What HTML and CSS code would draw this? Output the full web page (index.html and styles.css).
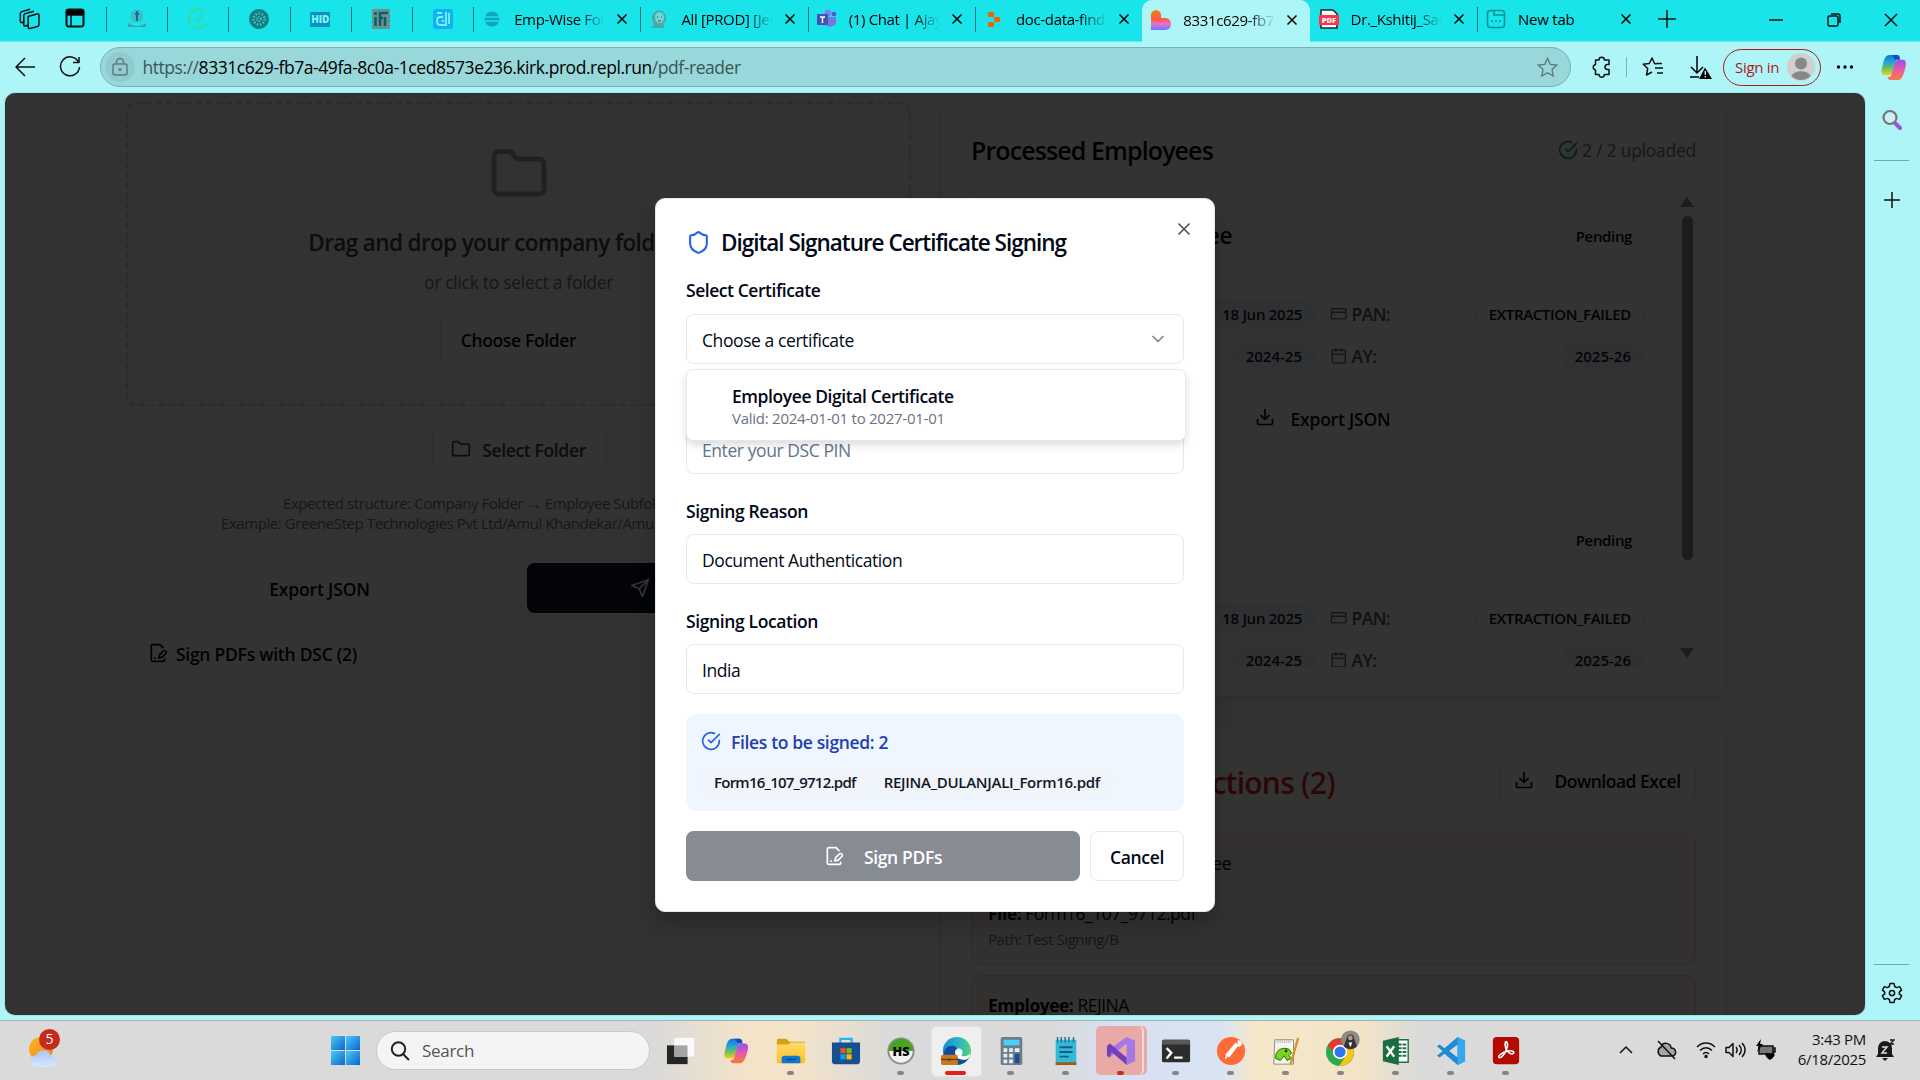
FILE: index.html
```html
<!DOCTYPE html>
<html lang="en">
<head>
<meta charset="utf-8">
<title>PDF Reader</title>
<link rel="stylesheet" href="styles.css">
</head>
<body>
<svg class="defs" width="0" height="0" aria-hidden="true">
  <defs>
    <linearGradient id="gBlue" x1="0" y1="0" x2="1" y2="1"><stop offset="0" stop-color="#4cc8fb"/><stop offset="1" stop-color="#0a67c9"/></linearGradient>
    <linearGradient id="gLove" x1="0" y1="0" x2="0" y2="1"><stop offset="0" stop-color="#ff7a18"/><stop offset=".45" stop-color="#ff5a3c"/><stop offset=".7" stop-color="#ee6fd0"/><stop offset="1" stop-color="#5a7bff"/></linearGradient>
    <linearGradient id="gCopA" x1="0" y1="0" x2="0" y2="1"><stop offset="0" stop-color="#1a6fe0"/><stop offset=".35" stop-color="#1ba6d8"/><stop offset=".7" stop-color="#7cc44e"/><stop offset="1" stop-color="#f5cf1d"/></linearGradient>
    <linearGradient id="gCopB" x1="0" y1="0" x2="0" y2="1"><stop offset="0" stop-color="#9a4df0"/><stop offset=".5" stop-color="#e85aa8"/><stop offset="1" stop-color="#fb7a3c"/></linearGradient>
    <linearGradient id="gSun" x1="0" y1="0" x2="1" y2="1"><stop offset="0" stop-color="#fdb827"/><stop offset="1" stop-color="#f07f13"/></linearGradient>
    <linearGradient id="gCloud" x1="0" y1="0" x2="0" y2="1"><stop offset="0" stop-color="#a9c4f7"/><stop offset="1" stop-color="#d9e7fd"/></linearGradient>
    <linearGradient id="gFold" x1="0" y1="0" x2="0" y2="1"><stop offset="0" stop-color="#ffdb66"/><stop offset="1" stop-color="#fbc02a"/></linearGradient>
    <linearGradient id="gEdge" x1="0" y1="0" x2="1" y2="0"><stop offset="0" stop-color="#1c8ad6"/><stop offset=".6" stop-color="#27b8c8"/><stop offset="1" stop-color="#5fd46a"/></linearGradient>
  </defs>
  <symbol id="folder" viewBox="0 0 24 24"><path d="M4 20h16a2 2 0 0 0 2-2V8a2 2 0 0 0-2-2h-7.93a2 2 0 0 1-1.66-.9l-.82-1.2A2 2 0 0 0 7.93 3H4a2 2 0 0 0-2 2v13c0 1.1.9 2 2 2Z"/></symbol>
  <symbol id="send" viewBox="0 0 24 24"><path d="m22 2-7 20-4-9-9-4Z"/><path d="M22 2 11 13"/></symbol>
  <symbol id="filesign" viewBox="0 0 24 24"><path d="M20 19.5v.5a2 2 0 0 1-2 2H6a2 2 0 0 1-2-2V4a2 2 0 0 1 2-2h8.5L18 5.5"/><path d="M8 18h1"/><path d="M18.42 9.61a2.1 2.1 0 1 1 2.97 2.97L16.95 17 13 18l.99-3.95 4.43-4.44Z"/></symbol>
  <symbol id="check" viewBox="0 0 24 24"><path d="M22 11.08V12a10 10 0 1 1-5.93-9.14"/><path d="m9 11 3 3L22 4"/></symbol>
  <symbol id="shield" viewBox="0 0 24 24"><path d="M20 13c0 5-3.5 7.5-7.66 8.95a1 1 0 0 1-.67-.01C7.5 20.5 4 18 4 13V6a1 1 0 0 1 1-1c2 0 4.5-1.2 6.24-2.72a1.17 1.17 0 0 1 1.52 0C14.51 3.81 17 5 19 5a1 1 0 0 1 1 1z"/></symbol>
  <symbol id="x" viewBox="0 0 24 24"><path d="M18 6 6 18M6 6l12 12"/></symbol>
  <symbol id="chev" viewBox="0 0 24 24"><path d="m6 9 6 6 6-6"/></symbol>
  <symbol id="download" viewBox="0 0 24 24"><path d="M21 15v4a2 2 0 0 1-2 2H5a2 2 0 0 1-2-2v-4"/><path d="m7 10 5 5 5-5M12 15V3"/></symbol>
  <symbol id="card" viewBox="0 0 24 24"><rect x="2" y="5" width="20" height="14" rx="2"/><path d="M2 10h20"/></symbol>
  <symbol id="cal" viewBox="0 0 24 24"><path d="M8 2v4M16 2v4M3 10h18"/><rect x="3" y="4" width="18" height="18" rx="2"/></symbol>
  <symbol id="star" viewBox="0 0 24 24"><path d="m12 2.500 2.900 6.200 6.800.8-5 4.600 1.300 6.700-6-3.300-6 3.300 1.300-6.700-5-4.600 6.800-.8z"/></symbol>
  <symbol id="copilot" viewBox="0 0 32 32"><path d="M20 3h-8C7 3 6 9 5 13c-1 4-3 9 1 11h5c3 0 4-3 5-7l3-9c.6-2 2-2 4-2-.5-2-1.500-3-3-3z" fill="url(#gCopA)"/><path d="M13 29h7c5 0 6-6 7.500-10 1-4 3-9-1-11h-5c-3 0-4 3-5 7l-2.500 8c-.8 3-2 3-4 3 .5 2 1.500 3 3 3z" fill="url(#gCopB)"/><path d="M19 3c2 0 3 1.500 4 5h-4c-2 0-2-3-5-5z" fill="#1748c8"/></symbol>
</svg>

<div class="screen">
  <header class="tabs">
    <div class="tab-tools">
      <svg width="22" height="22" viewBox="0 0 22 22" class="ln"><path d="M9 8.500 18 6c1.500-.4 2 .2 2 1.500v9c0 1-.4 1.500-1.500 2L11 20.500c-1 .3-1.800-.2-1.800-1.500V8.500zM9.200 17 6.500 18c-1 .3-1.700-.1-1.700-1.300V7.500c0-1 .5-1.500 1.500-1.900L15 3.200M4.800 14 3 14.500c-1 .3-1.700-.2-1.700-1.400V5.500c0-1 .5-1.500 1.500-1.900L11 1.200"/></svg>
      <svg width="20" height="20" viewBox="0 0 20 20" class="ln"><rect x="1.500" y="1.500" width="17" height="17" rx="2.500" stroke-width="2"/><path d="M1.500 2h17v5h-17z" fill="#000"/><path d="M6 7v11.500"/></svg>
    </div>
    <div class="pin"><svg width="22" height="22" viewBox="0 0 22 22"><circle cx="11" cy="8" r="6.500" fill="#38bfc3"/><path d="M11 3v10M9 6h4" stroke="#1668a8" stroke-width="2"/><path d="M2 15c5 4 13 4 18 0v4H2z" fill="#4f9ba5"/></svg></div>
    <div class="pin"><svg width="22" height="22" viewBox="0 0 22 22" fill="none" stroke="#38d9a0" stroke-width="1.800"><path d="M17.500 3.500a9.500 9.500 0 1 0 2 12M8 11l3 3 6-7"/></svg></div>
    <div class="pin"><svg width="22" height="22" viewBox="0 0 22 22"><circle cx="11" cy="11" r="10" fill="#127d82"/><circle cx="11" cy="11" r="5.500" fill="none" stroke="#48c8c8" stroke-width="2.500" stroke-dasharray="1.300 1.800"/><circle cx="11" cy="11" r="2" fill="none" stroke="#48c8c8" stroke-width="2" stroke-dasharray="1 1"/></svg></div>
    <div class="pin"><span class="hid">HID</span></div>
    <div class="pin"><svg width="20" height="22" viewBox="0 0 20 22"><path d="M1 1h18v20H1z" fill="#6a9094"/><path d="M4.500 9v9M4.500 4v3M9 18V5h8M14 9v9M9 10h3" stroke="#075f68" stroke-width="2.500" fill="none"/></svg></div>
    <div class="pin"><svg width="22" height="22" viewBox="0 0 22 22"><rect x="1" y="1" width="20" height="20" rx="3" fill="#12b2f2"/><path d="M14 4v13H8c-4 0-4-8 0-8h3M5 5h5M11 12v2M17 5v11" stroke="#7cf0ff" stroke-width="1.800" fill="none"/></svg></div>
    <div class="tab"><svg class="fav" viewBox="0 0 20 20"><circle cx="10" cy="10" r="7.500" fill="#12a3c4"/><path d="M2 8h16M2 12h16" stroke="#19e4ea" stroke-width="1.500"/></svg><span class="t">Emp-Wise Form</span><svg class="cl"><use href="#x"/></svg></div>
    <div class="tab"><svg class="fav" viewBox="0 0 20 20"><path d="M3 9c0-10 14-10 14 0 0 3-1 5-3 6l2 4H2l3-4c-1-2-2-3-2-6z" fill="#4aa9ad"/><ellipse cx="10.500" cy="8.500" rx="4.500" ry="5.500" fill="#73d5d2"/><path d="M8 8h1M12 8h1M9 12h3" stroke="#176d75"/></svg><span class="t">All [PROD] [Jen</span><svg class="cl"><use href="#x"/></svg></div>
    <div class="tab"><svg class="fav" viewBox="0 0 20 20"><circle cx="11" cy="4" r="3.500" fill="#7b83eb"/><circle cx="17" cy="5" r="2.300" fill="#5059c9"/><path d="M7 8h12v5c0 6-12 6-12 0z" fill="#7379de"/><rect y="5" width="11" height="11" rx="1" fill="#4650b8"/><path d="M3 8h5M5.500 8v6" stroke="#fff" stroke-width="1.500"/></svg><span class="t">(1) Chat | Ajay K</span><svg class="cl"><use href="#x"/></svg></div>
    <div class="tab nosep"><svg class="fav" viewBox="0 0 20 20" fill="#f26207"><rect x="4" y="3" width="6" height="5" rx="1"/><rect x="10" y="8" width="6" height="5" rx="1"/><rect x="4" y="13" width="6" height="5" rx="1"/></svg><span class="t">doc-data-finder</span><svg class="cl"><use href="#x"/></svg></div>
    <div class="tab active"><svg class="fav" viewBox="0 0 20 20"><path d="M0 5c0-6.500 10-6.500 10 0v3h4c8 0 8 12 0 12H0z" fill="url(#gLove)"/></svg><span class="t">8331c629-fb7a</span><svg class="cl"><use href="#x"/></svg></div>
    <div class="tab"><svg class="fav" viewBox="0 0 20 20"><path d="M2 1h12l4 4v14H2z" fill="#fff" stroke="#222" stroke-width="1.500"/><rect x="0" y="6" width="20" height="10" rx="1" fill="#fb3449"/><text x="10" y="14" font-size="7.500" font-weight="800" text-anchor="middle" fill="#fff">PDF</text></svg><span class="t">Dr._Kshitij_Sach</span><svg class="cl"><use href="#x"/></svg></div>
    <div class="tab"><svg class="fav" viewBox="0 0 20 20" fill="none" stroke="#0a9298" stroke-width="1.600"><rect x="1.500" y="1.500" width="17" height="17" rx="3"/><path d="M8 1.500V6h10M5 12h2M9 12h2M13 12h2"/></svg><span class="t full">New tab</span><svg class="cl"><use href="#x"/></svg></div>
    <svg class="newtab ln" width="20" height="20" viewBox="0 0 20 20"><path d="M10 1v18M1 10h18"/></svg>
    <div class="winctl">
      <svg width="14" height="14" viewBox="0 0 14 14" class="ln"><path d="M0 7h14"/></svg>
      <svg width="14" height="14" viewBox="0 0 14 14" class="ln"><rect x="1" y="3" width="10" height="10" rx="1.500"/><path d="M4 1h7c1.500 0 2 .5 2 2v7"/></svg>
      <svg width="14" height="14" viewBox="0 0 14 14" class="ln"><path d="m1 1 12 12M13 1 1 13"/></svg>
    </div>
  </header>

  <div class="toolbar">
    <svg class="ln back" width="22" height="22" viewBox="0 0 22 22"><path d="M21 11H2M11 2 2 11l9 9"/></svg>
    <svg class="ln reload" width="22" height="22" viewBox="0 0 22 22"><path d="M19.500 6A9.500 9.500 0 1 0 20.500 11M20 1v5.500h-6"/></svg>
    <div class="address">
      <span class="lock"><svg width="18" height="20" viewBox="0 0 18 20" fill="none" stroke="#5f7a7b" stroke-width="1.500"><rect x="2" y="7" width="14" height="11" rx="2"/><path d="M5.500 7V5a3.500 3.500 0 0 1 7 0v2"/><circle cx="9" cy="12.500" r=".8"/></svg></span>
      <span class="url"><i>https://</i>8331c629-fb7a-49fa-8c0a-1ced8573e236.kirk.prod.repl.run<i>/pdf-reader</i></span>
      <svg class="bookmark" width="23" height="23"><use href="#star"/></svg>
    </div>
    <svg class="ln ext" width="22" height="22" viewBox="0 0 22 22"><path d="M4.500 4H8a2.700 2.700 0 0 1 5.400 0H18v4.500h-1.500a2.500 2.500 0 0 0 0 5H18V18.500h-4.600a2.700 2.700 0 0 1-5.400 0H4.500v-4.500a2.800 2.800 0 0 1 0-5.500z"/></svg>
    <span class="tsep"></span>
    <svg class="ln favs" width="23" height="22" viewBox="0 0 23 22"><path d="M14.500 7.500H20M13 12h8M15 17h6M14.500 8 12.500 7.500 10 2 7.300 7.500l-6 .7L5.700 12.500 4.500 19l5.500-3"/></svg>
    <svg class="dl" width="24" height="25" viewBox="0 0 24 25"><path d="M9 1v17M3 12l6 6 6-6M2 22h9" fill="none" stroke="#000" stroke-width="1.500"/><path d="M17 12.500 24 24H11z"/><path d="M17.300 16v4M17.300 21v1.500" stroke="#fff" stroke-width="1.300"/></svg>
    <div class="signin"><span>Sign in</span><svg width="28" height="28" viewBox="0 0 28 28"><circle cx="14" cy="14" r="14" fill="#d2d0ce"/><circle cx="14" cy="10.500" r="6" fill="#8a8886"/><path d="M4.500 23c2-6.500 17-6.500 19 0a13.500 13.500 0 0 1-19 0z" fill="#8a8886"/></svg></div>
    <svg class="dots" width="18" height="6" viewBox="0 0 18 6"><circle cx="2.500" cy="3" r="1.700"/><circle cx="9" cy="3" r="1.700"/><circle cx="15.500" cy="3" r="1.700"/></svg>
    <svg class="cop" width="31" height="31"><use href="#copilot"/></svg>
  </div>

  <div class="body">
    <main class="viewport">
      <div class="content">
        <section class="left">
          <div class="drop">
            <svg class="ic big"><use href="#folder"/></svg>
            <h3>Drag and drop your company folder here</h3>
            <p>or click to select a folder</p>
            <button class="btn choose">Choose Folder</button>
          </div>
          <button class="btn select"><svg class="ic"><use href="#folder"/></svg>Select Folder</button>
          <div class="hint"><p>Expected structure: Company Folder → Employee Subfolders</p><p class="ex">Example: GreeneStep Technologies Pvt Ltd/Amul Khandekar/Amul</p></div>
          <div class="pair"><button class="btn">Export JSON</button><button class="btn dark"><svg class="ic"><use href="#send"/></svg></button></div>
          <button class="btn signall"><svg class="ic"><use href="#filesign"/></svg>Sign PDFs with DSC (2)</button>
        </section>

        <section class="right">
          <div class="panel processed">
            <div class="phead"><h2>Processed Employees</h2><span class="up"><svg class="ic green"><use href="#check"/></svg>2 / 2 uploaded</span></div>
            <div class="list">
              <div class="items">
                <article class="emp">
                  <div class="ehead"><h3 class="far">Unknown Employee</h3><span class="badge out">Pending</span></div>
                  <div class="fields">
                    <div class="f"><span class="badge sec">18 Jun 2025</span></div>
                    <div class="f"><span class="k"><svg class="ic"><use href="#card"/></svg>PAN:</span><span class="badge out">EXTRACTION_FAILED</span></div>
                    <div class="f"><span class="badge sec yr">2024-25</span></div>
                    <div class="f"><span class="k"><svg class="ic"><use href="#cal"/></svg>AY:</span><span class="badge sec yr">2025-26</span></div>
                  </div>
                  <button class="btn exp"><svg class="ic"><use href="#download"/></svg>Export JSON</button>
                </article>
                <article class="emp second">
                  <div class="ehead"><h3>REJINA</h3><span class="badge out">Pending</span></div>
                  <div class="fields">
                    <div class="f"><span class="badge sec">18 Jun 2025</span></div>
                    <div class="f"><span class="k"><svg class="ic"><use href="#card"/></svg>PAN:</span><span class="badge out">EXTRACTION_FAILED</span></div>
                    <div class="f"><span class="badge sec yr">2024-25</span></div>
                    <div class="f"><span class="k"><svg class="ic"><use href="#cal"/></svg>AY:</span><span class="badge sec yr">2025-26</span></div>
                  </div>
                </article>
              </div>
              <div class="sbar"><i class="upar"></i><i class="thumb"></i><i class="downar"></i></div>
            </div>
          </div>
          <div class="panel failed">
            <div class="fhead"><h2>Failed Extractions (2)</h2><button class="btn xls"><svg class="ic"><use href="#download"/></svg>Download Excel</button></div>
            <div class="err"><p class="who"><b>Employee:</b><span>Unknown Employee</span></p><p class="file"><b>File:</b> Form16_107_9712.pdf</p><p class="path">Path: Test Signing/B</p></div>
            <div class="err"><p><b>Employee:</b> REJINA</p></div>
          </div>
        </section>
      </div>
      <div class="overlay">
        <div class="modal">
          <svg class="ic close"><use href="#x"/></svg>
          <h2><svg class="ic"><use href="#shield"/></svg>Digital Signature Certificate Signing</h2>
          <label class="l1">Select Certificate</label>
          <div class="input sel"><span class="choice">Choose a certificate</span><svg class="ic"><use href="#chev"/></svg>
            <div class="menu"><b>Employee Digital Certificate</b><span>Valid: 2024-01-01 to 2027-01-01</span></div>
          </div>
          <div class="input pinput">Enter your DSC PIN</div>
          <label>Signing Reason</label>
          <div class="input">Document Authentication</div>
          <label>Signing Location</label>
          <div class="input">India</div>
          <div class="files">
            <div class="fh"><svg class="ic"><use href="#check"/></svg>Files to be signed: 2</div>
            <div class="chips"><span class="badge sec">Form16_107_9712.pdf</span><span class="badge sec caps">REJINA_DULANJALI_Form16.pdf</span></div>
          </div>
          <div class="actions"><button class="sign"><svg class="ic"><use href="#filesign"/></svg>Sign PDFs</button><button class="cancel">Cancel</button></div>
        </div>
      </div>
    </main>
    <aside class="side">
      <svg width="22" height="22" viewBox="0 0 22 22" fill="none"><circle cx="9" cy="8.500" r="6.500" stroke="#6d7780" stroke-width="2.200" fill="#cfeef2"/><path d="m14.500 14.500 4.500 4.500" stroke="#9a55d8" stroke-width="4" stroke-linecap="round"/></svg>
      <hr class="h1">
      <svg class="ln pl" width="16" height="16" viewBox="0 0 16 16"><path d="M8 0v16M0 8h16"/></svg>
      <hr class="h2">
      <svg class="ln gear" width="22" height="22" viewBox="0 0 22 22"><path d="M9 1.500h4l.7 3 2 1.100 2.900-1 2 3.500-2.300 2v1.800l2.300 2-2 3.500-2.900-1-2 1.100-.7 3H9l-.7-3-2-1.100-2.900 1-2-3.500 2.300-2v-1.800l-2.300-2 2-3.500 2.900 1 2-1.100z"/><circle cx="11" cy="11" r="2.600"/></svg>
    </aside>
  </div>

  <footer class="taskbar">
    <div class="weather"><svg width="32" height="34" viewBox="0 0 32 34"><circle cx="12" cy="15" r="12" fill="url(#gSun)"/><path d="M8 33a6 6 0 0 1-1-12 8 8 0 0 1 15 1 5.500 5.500 0 0 1 0 11z" fill="url(#gCloud)"/></svg><em>5</em></div>
    <svg class="win" width="29" height="29" viewBox="0 0 29 29" fill="url(#gBlue)"><rect width="14" height="14"/><rect x="15" width="14" height="14"/><rect y="15" width="14" height="14"/><rect x="15" y="15" width="14" height="14"/></svg>
    <div class="search"><svg width="20" height="20" viewBox="0 0 20 20" fill="none" stroke="#222" stroke-width="2"><circle cx="8.500" cy="8" r="6.700"/><path d="m13 13 6 6"/></svg>Search</div>
    <div class="apps">
      <div class="app"><svg viewBox="0 0 32 32"><path d="M1 10h22v20H1z" fill="#252525"/><path d="M9 2h21v20H9z" fill="#fafafa"/><path d="M9 10h14v12H9z" fill="#a5a5a5"/></svg></div>
      <div class="app"><svg viewBox="0 0 32 32"><use href="#copilot"/></svg></div>
      <div class="app run"><svg viewBox="0 0 32 32"><path d="M1 5c0-2 1-2 2-2h8l3 3h17v20H1z" fill="#d99d10"/><path d="M1 9h12l3-2h15v20c0 2-1 2-2 2H1z" fill="url(#gFold)"/><path d="M6 29v-5c0-2 1-3 3-3h14c2 0 3 1 3 3v5z" fill="#0f77cf"/><path d="M11 25h10" stroke="#0a4a8d" stroke-width="1.500"/></svg></div>
      <div class="app"><svg viewBox="0 0 32 32"><path d="M10 8V3h12v5" fill="none" stroke="#27b4f2" stroke-width="2.500"/><path d="M1 7h30v20c0 2-1 3-3 3H4c-2 0-3-1-3-3z" fill="#174f92"/><path d="M10 13h5.500v5.500H10z" fill="#f25022"/><path d="M16.500 13H22v5.500h-5.500z" fill="#7fba00"/><path d="M10 19.500h5.500V25H10z" fill="#00a4ef"/><path d="M16.500 19.500H22V25h-5.500z" fill="#ffb900"/></svg></div>
      <div class="app run"><svg viewBox="0 0 32 32"><circle cx="16" cy="16" r="13.500" fill="#f2f2f2" stroke="#8a8f88" stroke-width="2"/><path d="M3 16a13 13 0 0 1 26 0z" fill="#45a522"/><text x="16" y="21" font-size="13.500" font-weight="800" text-anchor="middle">HS</text></svg></div>
      <div class="app run on"><svg viewBox="0 0 32 32"><circle cx="17" cy="16" r="15" fill="url(#gEdge)"/><path d="M3 20c0-11 14-13 15-4-4 3-3 9 4 9 3 0 6-1 8-3-5 12-24 12-27-2z" fill="#104a9a"/><path d="M15 17c0-5 8-5 8 0 0 2-1 3-1 4s8 1 9-3c0 6-4 8-9 7-5-1-7-4-7-8z" fill="#fff"/><rect x="0" y="20" width="18" height="11" rx="2" fill="#c87a22"/><path d="M0 25h18M9 24v3" stroke="#6e3c08" stroke-width="1.500"/></svg></div>
      <div class="app run"><svg viewBox="0 0 32 32"><rect x="5" y="1" width="23" height="30" rx="2" fill="#6d7c89"/><path d="M8 4h17v6H8z" fill="#49d0f7"/><path d="M8 13h4v4H8zM14 13h4v4h-4zM20 13h5v4h-5zM8 19h4v4H8zM14 19h4v4h-4zM8 25h4v4H8zM14 25h4v4h-4z" fill="#e9edf1"/><path d="M20 19h5v10h-5z" fill="#174f92"/></svg></div>
      <div class="app run"><svg viewBox="0 0 32 32"><rect x="5" y="4" width="22" height="27" rx="1" fill="#35b9d8"/><path d="M5 28h22v3H5z" fill="#a15a16"/><path d="M9 12h14M9 17h14M9 22h10" stroke="#155f7d" stroke-width="2"/><path d="M7 1v6M11 1v6M15 1v6M19 1v6M24 1v6" stroke="#1d6f8c" stroke-width="1.500"/></svg></div>
      <div class="app run vs"><svg viewBox="0 0 32 32"><path d="m22 1 9 4v22l-9 4V8L4 23l-3-2V11l3-3 4 3L22 1z" fill="#a877e6"/><path d="m1 11 3-3 18 15v8L6 17l-2 6-3-2z" fill="#7440b8"/></svg></div>
      <div class="app run"><svg viewBox="0 0 32 32"><rect x="1" y="4" width="30" height="24" rx="2" fill="#2d2d2d"/><path d="M1 6a2 2 0 0 1 2-2h26a2 2 0 0 1 2 2v3H1z" fill="#585858"/><path d="m6 13 5 5-5 6M14 23h9" fill="none" stroke="#fff" stroke-width="2.500"/></svg></div>
      <div class="app run"><svg viewBox="0 0 32 32"><circle cx="16" cy="16" r="15" fill="#ff6c37"/><path d="m11 20 10-12 2 2-9 12zM23 6a2.500 2.500 0 1 1 0 4M10 24l2-3" fill="#fff" stroke="#fff" stroke-width="1.500"/></svg></div>
      <div class="app run"><svg viewBox="0 0 32 32"><path d="M4 4h20v26H3z" fill="#f6f6ee" stroke="#8b8b7d"/><path d="M6 6h16" stroke="#bbb" stroke-width="3" stroke-dasharray="1 1"/><path d="M5 24c-1-8 6-13 14-10l3 4-3 3 3 3-5 2-3-5-4 5z" fill="#7ed321" stroke="#1f6207"/><circle cx="16" cy="16" r="1.500" fill="#143d05"/><path d="m29 2-7 24-1 4" stroke="#d5952f" stroke-width="2.500"/></svg></div>
      <div class="app run"><svg viewBox="0 0 32 32"><circle cx="15" cy="17" r="15" fill="#2da94f"/><path d="M2 10a15 15 0 0 1 26 0H15l-5 10z" fill="#e33b2e"/><path d="M15 10h13c5 9-1 22-14 22l8-12z" fill="#fcc31e"/><circle cx="15" cy="17" r="6.800" fill="#2f74e8" stroke="#fff" stroke-width="1.800"/><circle cx="26" cy="4" r="10" fill="#8b8b8b"/><path d="M19 11l3-8c1-6 8-6 8 0l3 8c-4 4-10 4-14 0z" fill="#333"/><circle cx="26" cy="2" r="2.500" fill="#c59a82"/><path d="m24 7 2 5 2-5z" fill="#fff"/></svg></div>
      <div class="app run"><svg viewBox="0 0 32 32"><path d="M14 4h15v24H14z" fill="#fff" stroke="#1e7145" stroke-width="1.500"/><path d="M18 9h9M18 13h9M18 17h9M18 21h9" stroke="#1e7145" stroke-width="2.200" stroke-dasharray="4 1"/><path d="m2 5 17-4v30L2 27z" fill="#1b6e41"/><path d="m6 11 8 11M14 11 6 22" stroke="#fff" stroke-width="2.500"/></svg></div>
      <div class="app run"><svg viewBox="0 0 32 32"><path d="m23 1 8 4v22l-8 4L9 19l-5 4-3-2 6-5-6-5 3-2 5 4z" fill="#1f8ad2"/><path d="M23 9v14l-9-7z" fill="#dcdcdc"/><path d="m23 1 8 4v22l-8 4z" fill="#36a8ee"/></svg></div>
      <div class="app run"><svg viewBox="0 0 32 32"><rect x="2" y="1" width="28" height="29" rx="4" fill="#b30b00"/><path d="M9 23c-3-1 3-6 9-7s8 2 5 3-8-4-8-10 4-2 2 4-6 11-8 10z" fill="none" stroke="#fff" stroke-width="1.700"/></svg></div>
    </div>
    <div class="tray">
      <svg class="ln" width="14" height="10" viewBox="0 0 14 10" stroke-width="2"><path d="m1 8 6-6 6 6"/></svg>
      <svg class="ln" width="22" height="22" viewBox="0 0 22 22"><path d="M6 17a5 5 0 0 1 0-9c2-6 10-4 10 1 6 0 6 8 1 8z" fill="#a5a5a5"/><path d="m3 2 17 18"/></svg>
      <svg class="ln" width="20" height="18" viewBox="0 0 20 18" stroke-width="1.700"><path d="M1 6c5-5.500 13-5.500 18 0M4 9.500c3.500-3.800 8.500-3.800 12 0M7 13c1.800-2 4.200-2 6 0"/><circle cx="10" cy="15.500" r="1"/></svg>
      <svg class="ln" width="21" height="18" viewBox="0 0 21 18" stroke-width="1.500"><path d="M1 6.500v5h3l4 4v-13l-4 4zM11 6c1.500 2 1.500 4 0 6M14 4c3 3 3 7 0 10M17 2c4 4 4 10 0 14"/></svg>
      <svg width="22" height="22" viewBox="0 0 22 22"><path d="M4 7h14v8H4zM18 9h2v4h-2" fill="#777" stroke="#111" stroke-width="1.500"/><path d="M6 0 1 7h3l-2 6 6-8H5z"/><path d="M15 21c-8-5-4-9 0-6 4-3 8 1 0 6z"/></svg>
      <div class="clock"><span>3:43 PM</span><span>6/18/2025</span></div>
      <svg width="20" height="22" viewBox="0 0 20 22"><path d="M3 15V9a7 7 0 0 1 14 0v6l2 3H1zM7 19h6l-3 3z" fill="#1a1a1a"/><path d="M7 8h5l-5 6h5" stroke="#ddd" stroke-width="1.500" fill="none"/><path d="M15 1h4l-4 4h4" stroke="#1a1a1a" stroke-width="1.300" fill="none"/></svg>
    </div>
  </footer>
</div>
</body>
</html>
```
FILE: styles.css
```css
* { box-sizing: border-box; }
body { margin: 0; font-family: "Open Sans", "Noto Sans", sans-serif; overflow: hidden; color: #020817; }
h2, h3, p { margin: 0; font-weight: 600; }
p { font-weight: 400; }
button { font: inherit; padding: 0; }
svg { display: block; flex: none; }
.defs { position: absolute; }
.ln { fill: none; stroke: #111; stroke-width: 1.5; stroke-linejoin: round; }
.screen { width: 1920px; height: 1080px; display: flex; flex-direction: column; background: #aef5f8; }

/* Tab strip */
.tabs { height: 42px; background: #19e4ea; display: flex; align-items: center; padding-bottom: 3px; border-bottom: 1px solid #62ebef; }
.tab-tools { width: 106px; display: flex; gap: 24px; padding-left: 19px; }
.pin { width: 61.2px; height: 25px; border-left: 1px solid #08767b; display: flex; align-items: center; justify-content: center; padding-right: 1px; }
.hid { background: #0b93c0; color: #7df5fb; font-size: 10px; font-weight: 800; line-height: 15px; width: 20px; text-align: center; letter-spacing: -0.3px; }
.tab { width: 167.3px; height: 25px; border-left: 1px solid #08767b; display: flex; align-items: center; padding: 0 9px 0 8px; }
.tab .fav { width: 20px; height: 20px; margin-right: 12px; overflow: visible; }
.tab .t { width: 93px; font-size: 15px; white-space: nowrap; overflow: hidden; letter-spacing: -0.35px; color: #000; -webkit-mask-image: linear-gradient(90deg, #000 70%, transparent); mask-image: linear-gradient(90deg, #000 70%, transparent); }
.tab .t.full { -webkit-mask-image: none; mask-image: none; letter-spacing: -0.2px; }
.tab .cl { width: 18px; height: 18px; margin-left: 8px; stroke: #000; stroke-width: 2; fill: none; }
.tab.active { height: 43px; align-self: flex-start; background: #aef5f8; border: 0; border-radius: 10px 10px 0 0; padding-left: 9px; padding-bottom: 4px; }
.tab.active + .tab { border-color: transparent; }
.newtab { margin-left: 13px; }
.winctl { margin-left: auto; display: flex; gap: 43.5px; padding: 2px 22px 0 0; }

/* Toolbar */
.toolbar { height: 51px; display: flex; align-items: center; padding: 0 0 1px 14px; }
.reload { margin-left: 23px; }
.address { margin-left: 19px; width: 1471px; height: 40px; border: 1px solid #7eaeb0; border-radius: 20px; background: #98d7da; display: flex; align-items: center; padding: 0 11px 0 4px; }
.lock { width: 30px; height: 30px; border-radius: 50%; background: #90cccf; display: flex; align-items: center; justify-content: center; }
.url { margin-left: 7.5px; font-size: 17.5px; letter-spacing: -0.45px; color: #000; white-space: nowrap; }
.url i { font-style: normal; color: #3b5657; }
.bookmark { margin-left: auto; fill: none; stroke: #5f7a7b; stroke-width: 1.4; }
.ext { margin-left: 20px; }
.tsep { width: 1px; height: 20px; background: #7bb5b8; margin-left: 13px; }
.favs { margin-left: 15px; }
.dl { margin-left: 23px; }
.signin { margin-left: 11px; width: 98px; height: 37px; border: 1.5px solid #b0171c; border-radius: 19px; color: #b0171c; font-size: 15px; letter-spacing: -0.3px; display: flex; align-items: center; justify-content: space-between; padding: 0 5px 0 11px; }
.dots { margin-left: 15px; }
.cop { margin-left: 24px; }

/* Page and sidebar */
.body { height: 922px; display: flex; padding-left: 5px; }
.viewport { width: 1860px; height: 922px; border-radius: 10px; overflow: hidden; position: relative; background: #fbfbfb; box-shadow: 0 0 1px #345; }
.content { display: flex; gap: 30px; padding: 9px 0 0 121px; height: 922px; }
.ic { width: 20px; height: 20px; fill: none; stroke: currentColor; stroke-width: 2; stroke-linecap: round; stroke-linejoin: round; }
.btn { display: flex; align-items: center; justify-content: center; background: #fff; border: 1px solid #e2e8f0; border-radius: 7.5px; height: 50px; padding-top: 2px; font-size: 17.5px; font-weight: 600; letter-spacing: -0.35px; color: #020817; white-space: nowrap; }
.btn .ic { margin-top: -3px; }
.left { width: 785px; display: flex; flex-direction: column; align-items: center; }
.drop { width: 785px; height: 304px; border: 2px dashed #d1d5db; border-radius: 10px; padding-top: 40px; display: flex; flex-direction: column; align-items: center; }
.big { width: 60px; height: 60px; color: #9ca3af; }
.drop h3 { margin-top: 21px; line-height: 35px; font-size: 22.5px; color: #374151; letter-spacing: -0.62px; }
.drop p { margin-top: 10px; line-height: 25px; font-size: 17.5px; color: #6b7280; letter-spacing: -0.3px; }
.choose { width: 157px; margin-top: 18.500px; }
.select { width: 174px; height: 47px; margin-top: 20px; gap: 11px; color: #374151; padding-top: 1px; }
.hint { margin-top: 20px; width: 100%; font-size: 15px; line-height: 20px; color: #6b7280; white-space: nowrap; overflow: hidden; padding-left: 157px; letter-spacing: -0.42px; }
.hint .ex { margin-left: -62px; }
.pair { display: flex; gap: 14px; width: 100%; margin-top: 30px; }
.pair .btn { width: 387px; letter-spacing: -0.15px; }
.pair .dark { width: 384px; background: #0f172a; border: 0; color: #fff; justify-content: flex-start; padding-left: 103px; }
.signall { align-self: flex-start; width: 253px; margin-top: 15px; gap: 8px; letter-spacing: -0.25px; }
.right { width: 785px; }
.panel { background: #fff; border: 1px solid #e2e8f0; border-radius: 10px; box-shadow: 0 4px 10px #00000018; padding: 0 29px; }
.processed { height: 595px; padding-top: 28px; }
.phead { display: flex; justify-content: space-between; align-items: center; height: 37px; }
.phead h2 { font-size: 25px; letter-spacing: -0.9px; }
.up { display: flex; align-items: center; gap: 4px; font-size: 17.5px; color: #6b7280; letter-spacing: -0.25px; }
.green { color: #16a34a; }
.list { margin-top: 19px; height: 480px; overflow: hidden; display: flex; }
.items { width: 707px; }
.emp { height: 284px; border: 1px solid #e2e8f0; border-radius: 10px; padding: 31px 30px 0; }
.emp.second { margin-top: 20px; }
.ehead { display: flex; justify-content: space-between; align-items: center; height: 33px; }
.ehead h3 { width: 230px; font-size: 22.5px; letter-spacing: -0.4px; }
.ehead .far { text-align: right; }
.badge { display: inline-flex; align-items: center; height: 27.5px; border-radius: 14px; padding: 0 13px; border: 1px solid transparent; font-size: 15px; font-weight: 600; letter-spacing: -0.35px; white-space: nowrap; }
.out { border-color: #e2e8f0; }
.sec { background: #f1f5f9; color: #0f172a; letter-spacing: -0.27px; }
.yr { letter-spacing: 0; }
.fields { margin-top: 48px; display: grid; grid-template-columns: 314px 314px; column-gap: 15px; row-gap: 14px; }
.f { display: flex; height: 28px; align-items: center; }
.f .badge { margin-left: auto; }
.k { display: flex; align-items: center; gap: 4px; font-size: 17.5px; font-weight: 600; color: #4b5563; letter-spacing: -0.6px; margin-left: -1px; }
.k .ic { width: 17.5px; height: 17.5px; color: #6b7280; }
.exp { width: 100%; height: 45px; margin-top: 25px; gap: 15px; letter-spacing: -0.2px; padding-right: 2px; }
.sbar { width: 18px; height: 480px; display: flex; flex-direction: column; align-items: center; padding: 10px 0 9px; margin-left: 1px; background: #fafafa; }
.sbar i { display: block; flex: none; }
.upar { border: 7px solid transparent; border-top: 0; border-bottom: 10px solid #8b8b8b; }
.thumb { width: 11px; height: 344px; border-radius: 6px; background: #8b8b8b; margin-top: 9px; }
.downar { border: 7px solid transparent; border-bottom: 0; border-top: 10px solid #8b8b8b; margin-top: auto; }
.failed { margin-top: 30px; height: 400px; padding-top: 30px; }
.fhead { display: flex; justify-content: space-between; height: 45px; align-items: center; }
.fhead h2 { width: 364px; padding-top: 3px; text-align: right; font-size: 30px; letter-spacing: -0.75px; color: #dc2626; white-space: nowrap; }
.xls { width: 197px; height: 45px; gap: 20px; letter-spacing: -0.5px; padding-top: 1px; }
.err { height: 132px; margin-top: 10px; border: 1px solid #fecaca; background: #fef2e8; border-radius: 10px; padding: 17px 16px; font-size: 17.5px; line-height: 25px; letter-spacing: -0.5px; }
.fhead + .err { margin-top: 30px; }
.err b { font-weight: 700; }
.err .who { width: 243px; display: flex; justify-content: space-between; }
.err .file { margin-top: 25px; }
.err .path { font-size: 15px; color: #6b7280; letter-spacing: -0.4px; padding-top: 1px; }

/* Dialog */
.overlay { position: absolute; inset: 0; background: rgba(0, 0, 0, .8); }
.modal { position: relative; width: 560px; height: 714px; margin: 105px 0 0 650px; padding: 30px 30px 0; background: #fff; border: 1px solid #e2e8f0; border-radius: 10px; box-shadow: 0 12px 19px #00000030; }
.close { position: absolute; right: 20px; top: 20px; opacity: .7; }
.modal h2 { display: flex; align-items: center; gap: 10px; height: 26px; font-size: 22.5px; letter-spacing: -1.02px; white-space: nowrap; }
.modal h2 .ic { width: 25px; height: 25px; color: #2563eb; }
.modal label { display: block; margin-top: 25px; height: 25px; line-height: 25px; font-size: 17.5px; font-weight: 600; letter-spacing: -0.38px; margin-bottom: 10px; }
.modal .l1 { margin-top: 23px; margin-bottom: 11px; letter-spacing: -0.45px; }
.input { position: relative; display: flex; align-items: center; justify-content: space-between; height: 50px; border: 1px solid #e2e8f0; border-radius: 7.5px; padding: 2px 15px 0; font-size: 17.5px; letter-spacing: -0.42px; white-space: nowrap; }
.sel .ic { opacity: .5; margin-top: -3px; }
.menu { position: absolute; z-index: 2; left: -1px; top: 54px; width: 500px; height: 72px; background: #fff; border: 1px solid #e2e8f0; border-radius: 7.5px; box-shadow: 0 4px 8px #00000024; padding: 14px 0 0 45px; display: flex; flex-direction: column; }
.menu b { font-weight: 600; line-height: 25px; }
.menu span { font-size: 15px; line-height: 19px; color: #6b7280; letter-spacing: -0.25px; }
.pinput { margin-top: 60px; color: #64748b; }
.files { margin-top: 20px; height: 97px; border-radius: 10px; background: #eff6ff; padding: 15px; }
.fh { display: flex; align-items: center; gap: 10px; height: 26px; font-size: 17.5px; font-weight: 600; color: #1e40af; letter-spacing: -0.35px; }
.fh .ic { color: #2563eb; margin-top: -2px; }
.chips { display: flex; gap: 2px; margin-top: 13.5px; }
.chips .badge { letter-spacing: -0.76px; padding: 0 12px; }
.chips .caps { letter-spacing: -0.28px; }
.actions { display: flex; gap: 10px; margin-top: 20px; }
.actions button { height: 50px; border-radius: 7.5px; font-size: 17.5px; font-weight: 600; letter-spacing: -0.35px; display: flex; align-items: center; justify-content: center; padding-top: 2px; }
.actions .ic { margin-top: -3px; }
.sign { width: 394px; background: #878b94; color: #fff; border: 0; gap: 20px; }
.cancel { width: 94px; background: #fff; border: 1px solid #e2e8f0; color: #020817; }

.side { width: 55px; display: flex; flex-direction: column; align-items: center; padding: 16px 2px 0 0; }
.side hr { width: 35px; height: 1px; border: 0; background: #6fa9ac; margin: 0; }
.side .h1 { margin-top: 29px; }
.pl { margin-top: 31px; }
.side .h2 { margin-top: auto; }
.gear { margin: 17px 0 11px; }

/* Taskbar */
.taskbar { margin-top: 5px; height: 60px; border-top: 1px solid #a9b0b0; display: flex; align-items: center; background: linear-gradient(90deg, #dadada 655px, #f3e3c9 740px, #f3e3c9 800px, #dadada 890px, #dadada 1050px, #d7e0f0 1110px, #d9e4f3 1220px, #f5e8cb 1255px, #f3e4c8 1360px, #dadada 1420px); }
.weather { position: relative; width: 331px; padding-left: 29px; }
.weather em { position: absolute; left: 39px; top: -5px; width: 21px; height: 21px; border-radius: 50%; background: #c42b1c; color: #fff; font-size: 14px; line-height: 20px; font-style: normal; text-align: center; }
.search { margin-left: 16px; width: 274px; height: 39px; border-radius: 20px; background: #f4f4f4; border: 1px solid #c9c9c9; display: flex; align-items: center; gap: 12px; padding-left: 13px; font-size: 17px; letter-spacing: -0.3px; color: #555; }
.apps { display: flex; margin-left: 3px; }
.app { width: 55px; height: 58px; display: flex; align-items: center; justify-content: center; position: relative; }
.app svg { width: 30px; height: 30px; overflow: visible; z-index: 1; }
.app.run::after { content: ""; position: absolute; bottom: 5px; left: 24px; width: 7px; height: 4px; border-radius: 2px; background: #858585; }
.app.on::before, .app.vs::before { content: ""; position: absolute; left: 3px; top: 4px; width: 49px; height: 49px; border-radius: 5px; background: #efefef; border: 1px solid #e2e2e2; }
.app.on::after { left: 17px; width: 21px; background: #e0201b; }
.app.vs::before { background: #e9aaa7; border: 0; border-right: 2px solid #f6dada; box-shadow: 3px 0 0 #e9aaa7; width: 46px; }
.app.vs::after { background: #c42b1c; }
.tray { margin-left: auto; display: flex; align-items: center; padding: 0 25px 1px 0; gap: 9px; }
.tray svg:first-child { margin-right: 13px; }
.tray svg:nth-child(2) { margin-right: 10px; }
.clock { display: flex; flex-direction: column; align-items: flex-end; width: 80px; font-size: 15px; line-height: 20px; letter-spacing: -0.3px; color: #111; white-space: nowrap; padding-bottom: 2px; }
```
